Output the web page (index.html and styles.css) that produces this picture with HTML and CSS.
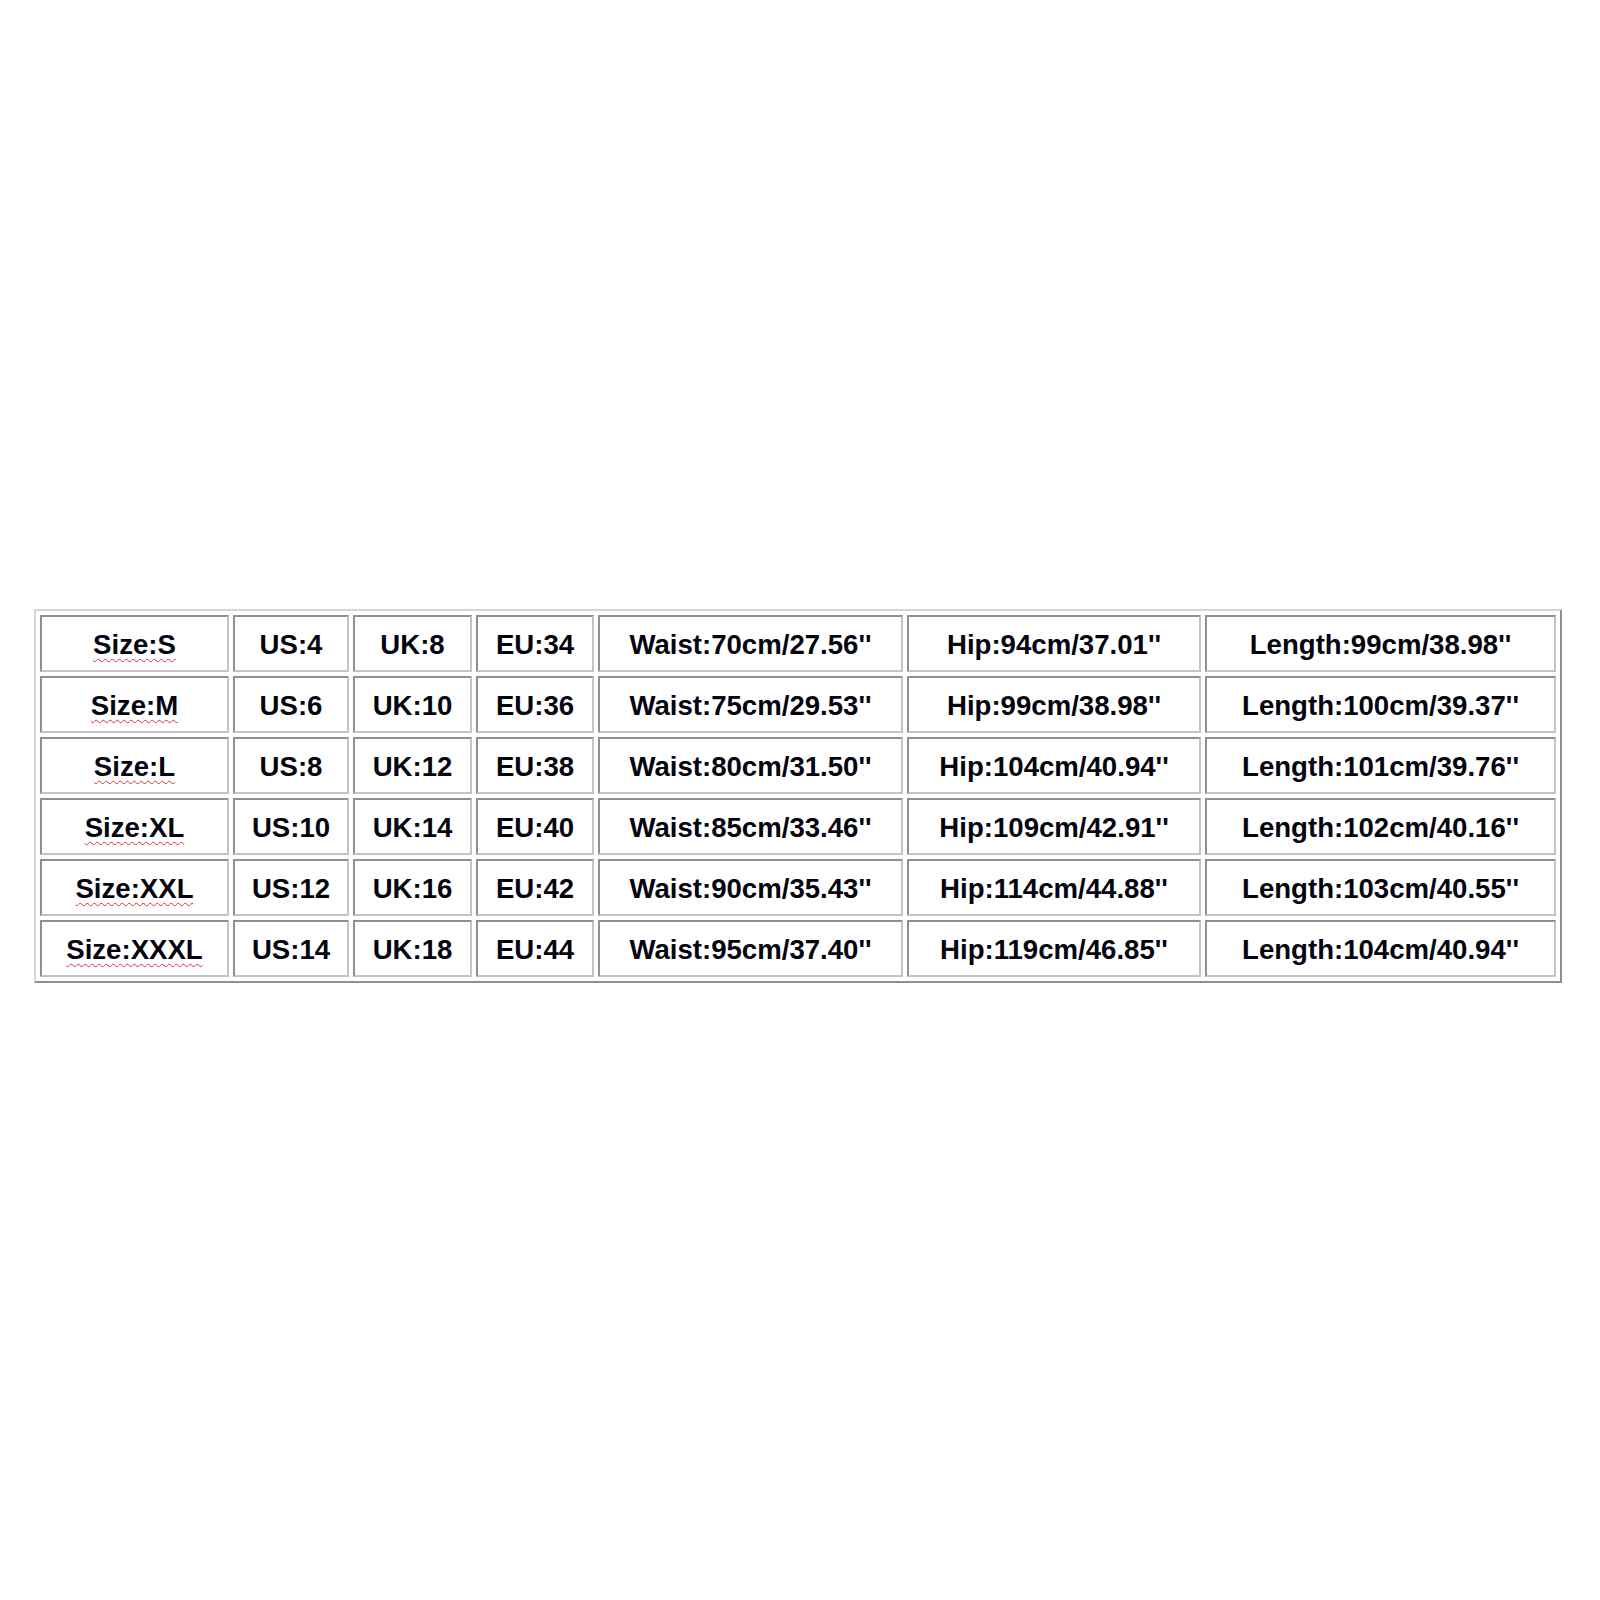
FILE: index.html
```html
<!DOCTYPE html>
<html>
<head>
<meta charset="utf-8">
<link rel="stylesheet" href="styles.css">
</head>
<body>
<div class="size-table">
  <div class="cell"><span class="spell">Size:S</span></div>
  <div class="cell">US:4</div>
  <div class="cell">UK:8</div>
  <div class="cell">EU:34</div>
  <div class="cell">Waist:70cm/27.56''</div>
  <div class="cell">Hip:94cm/37.01''</div>
  <div class="cell">Length:99cm/38.98''</div>

  <div class="cell"><span class="spell">Size:M</span></div>
  <div class="cell">US:6</div>
  <div class="cell">UK:10</div>
  <div class="cell">EU:36</div>
  <div class="cell">Waist:75cm/29.53''</div>
  <div class="cell">Hip:99cm/38.98''</div>
  <div class="cell">Length:100cm/39.37''</div>

  <div class="cell"><span class="spell">Size:L</span></div>
  <div class="cell">US:8</div>
  <div class="cell">UK:12</div>
  <div class="cell">EU:38</div>
  <div class="cell">Waist:80cm/31.50''</div>
  <div class="cell">Hip:104cm/40.94''</div>
  <div class="cell">Length:101cm/39.76''</div>

  <div class="cell"><span class="spell">Size:XL</span></div>
  <div class="cell">US:10</div>
  <div class="cell">UK:14</div>
  <div class="cell">EU:40</div>
  <div class="cell">Waist:85cm/33.46''</div>
  <div class="cell">Hip:109cm/42.91''</div>
  <div class="cell">Length:102cm/40.16''</div>

  <div class="cell"><span class="spell">Size:XXL</span></div>
  <div class="cell">US:12</div>
  <div class="cell">UK:16</div>
  <div class="cell">EU:42</div>
  <div class="cell">Waist:90cm/35.43''</div>
  <div class="cell">Hip:114cm/44.88''</div>
  <div class="cell">Length:103cm/40.55''</div>

  <div class="cell"><span class="spell">Size:XXXL</span></div>
  <div class="cell">US:14</div>
  <div class="cell">UK:18</div>
  <div class="cell">EU:44</div>
  <div class="cell">Waist:95cm/37.40''</div>
  <div class="cell">Hip:119cm/46.85''</div>
  <div class="cell">Length:104cm/40.94''</div>
</div>
</body>
</html>
```
FILE: styles.css
```css
html, body {
  margin: 0;
  padding: 0;
  background: #ffffff;
}

body {
  padding-top: 609px;
  padding-left: 34px;
  font-family: "Liberation Sans", Arial, sans-serif;
}

.size-table {
  display: grid;
  grid-template-columns: 189px 116px 119px 118px 305px 294px 351px;
  grid-auto-rows: 57px;
  gap: 4px;
  padding: 4px;
  width: max-content;
  border: 2px solid;
  border-color: #d4d4d4 #8e8e8e #8e8e8e #d4d4d4;
}

.cell {
  box-sizing: border-box;
  display: flex;
  align-items: center;
  justify-content: center;
  border: 2px solid;
  border-color: #8f8f8f #c4c4c4 #c4c4c4 #8f8f8f;
  font-size: 27.6px;
  font-weight: bold;
  color: #05050f;
  white-space: nowrap;
  padding-top: 2px;
}

.spell {
  text-decoration-line: underline;
  text-decoration-style: wavy;
  text-decoration-color: #d0343c;
  text-decoration-thickness: 1.3px;
  text-underline-offset: 4px;
}
```
